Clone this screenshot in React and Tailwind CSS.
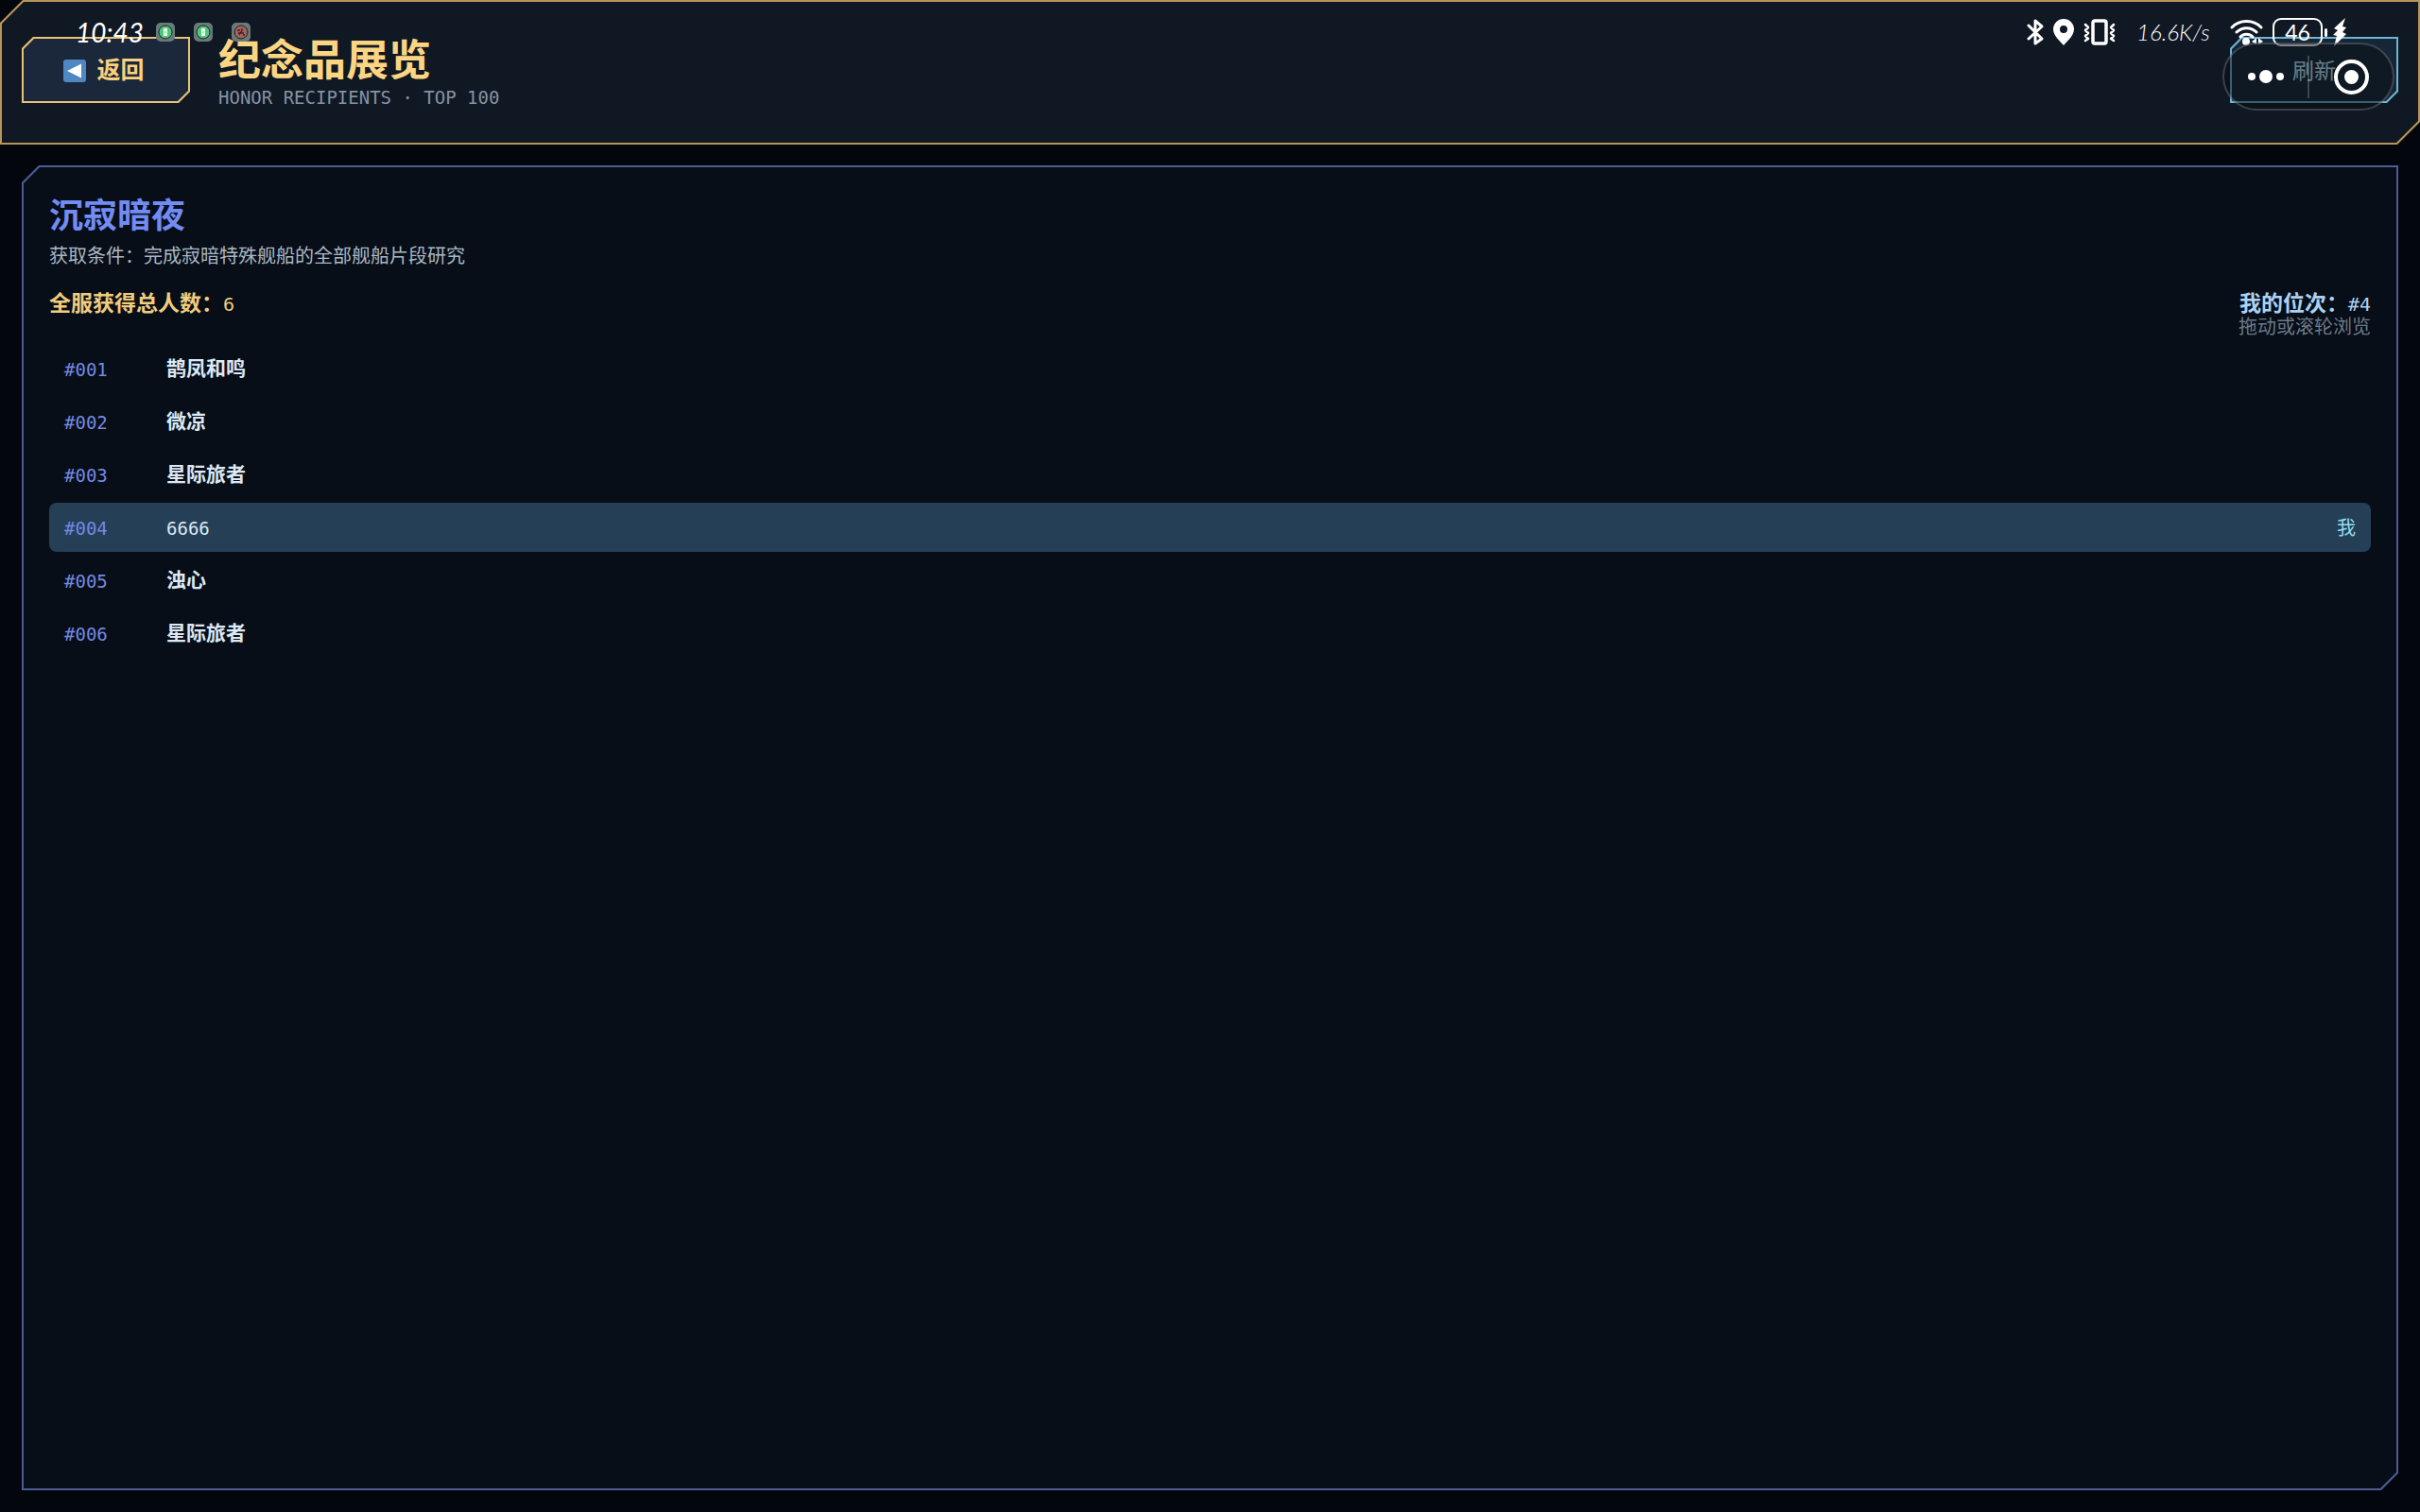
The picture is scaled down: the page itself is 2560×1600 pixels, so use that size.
import clsx from "clsx";

const RECIPIENTS = [
  { rank: "#001", name: "鹊凤和鸣" },
  { rank: "#002", name: "微凉" },
  { rank: "#003", name: "星际旅者" },
  { rank: "#004", name: "6666", me: true },
  { rank: "#005", name: "浊心" },
  { rank: "#006", name: "星际旅者" },
];

// Box with the top-left and bottom-right corners cut off
const CUT_24 = "[clip-path:polygon(24px_0,100%_0,100%_calc(100%-24px),calc(100%-24px)_100%,0_100%,0_24px)]";
const CUT_23 = "[clip-path:polygon(23px_0,100%_0,100%_calc(100%-23px),calc(100%-23px)_100%,0_100%,0_23px)]";
const CUT_18 = "[clip-path:polygon(18px_0,100%_0,100%_calc(100%-18px),calc(100%-18px)_100%,0_100%,0_18px)]";
const CUT_17 = "[clip-path:polygon(17px_0,100%_0,100%_calc(100%-17px),calc(100%-17px)_100%,0_100%,0_17px)]";
const CUT_12 = "[clip-path:polygon(12px_0,100%_0,100%_calc(100%-12px),calc(100%-12px)_100%,0_100%,0_12px)]";
const CUT_11 = "[clip-path:polygon(11px_0,100%_0,100%_calc(100%-11px),calc(100%-11px)_100%,0_100%,0_11px)]";

function AppBadge({ red }) {
  return (
    <svg viewBox="0 0 20 20" className="h-5 w-5">
      <rect width="20" height="20" rx="5" fill="#6b7a7a" />
      <circle cx="10" cy="10" r="7" fill={red ? "#a8605c" : "#4fc978"} stroke="#12251f" strokeWidth="1" />
      {red ? (
        <path d="M6 8h3M11 6v3M7 11h6M8 13l3-5M12 13h2" stroke="#33262a" strokeWidth="1.3" fill="none" />
      ) : (
        <>
          <rect x="8" y="6" width="4" height="8" fill="#f1fff5" />
          <path d="M10 9v2" stroke="#4fc978" />
        </>
      )}
    </svg>
  );
}

function StatusBar() {
  return (
    <div className="pointer-events-none absolute inset-x-0 top-0 z-10 flex h-[68px] items-center justify-between pr-[78px] pl-[80px] font-[Lato,sans-serif] text-white">
      <div className="flex items-center">
        <span className="w-[85px] text-[28px] italic">10:43</span>
        <div className="flex items-center gap-5">
          <AppBadge />
          <AppBadge />
          <AppBadge red />
        </div>
      </div>
      <div className="flex items-center">
        <svg viewBox="0 0 18 28" className="h-7 w-[18px]" fill="none" stroke="#fff" strokeWidth="3" strokeLinecap="round" strokeLinejoin="round">
          <path d="M2 21L16 8 9 2v10M2 7l7 7M9 17v9l7-5-5-5" />
        </svg>
        <svg viewBox="0 0 22 28" className="ml-[10px] h-7 w-[22px]" fill="#fff">
          <path fillRule="evenodd" d="M11 0a11 11 0 0 1 11 11c0 7-8 13-11 17C8 24 0 18 0 11A11 11 0 0 1 11 0zm0 7a4 4 0 1 0 0 8 4 4 0 0 0 0-8z" />
        </svg>
        <svg viewBox="0 0 34 28" className="ml-[10px] h-7 w-[34px]" fill="none" stroke="#fff" strokeLinejoin="round" strokeLinecap="round">
          <rect x="10" y="2" width="14" height="24" rx="2" strokeWidth="3.5" />
          <path d="M2 6l3 3-3 3 3 3-3 3 3 3-3 2M32 6l-3 3 3 3-3 3 3 3-3 3 3 2" strokeWidth="2.5" />
        </svg>
        <span className="ml-[22px] w-[99px] text-[24px] font-light italic">16.6K/s</span>
        <svg viewBox="0 0 36 28" className="h-7 w-9" fill="none" stroke="#fff" strokeWidth="3" strokeLinecap="round">
          <path d="M2 9a22 22 0 0 1 31 0M7 14a15 15 0 0 1 21 0M11 19a9 9 0 0 1 13 0" />
          <circle cx="17" cy="24" r="4" fill="#fff" stroke="none" />
          <path d="M23 24l5-4v7zM35 24l-5-4v7z" fill="#fff" stroke="none" />
        </svg>
        <span className="ml-[9px] flex h-[30px] w-[53px] items-center justify-center rounded-[9px] border-2 border-white text-[23px]">46</span>
        <span className="ml-[2px] h-[9px] w-[3px] rounded bg-white" />
        <svg viewBox="0 0 14 30" className="ml-[6px] h-[30px] w-[14px]" fill="#fff">
          <path d="M13 0L1 11l4 2-5 5 4 1-3 11L14 17l-4-2 4-5-4-1z" />
        </svg>
      </div>
    </div>
  );
}

function Capsule() {
  return (
    <div className="absolute top-[45px] right-[27px] z-10 flex h-[72px] w-[182px] items-center rounded-full border-2 border-white/20 bg-[#070c12]/50">
      <button aria-label="更多" className="flex h-full flex-1 items-center justify-center gap-1">
        <span className="h-2 w-2 rounded-full bg-white" />
        <span className="h-[14px] w-[14px] rounded-full bg-white" />
        <span className="h-2 w-2 rounded-full bg-white" />
      </button>
      <span className="h-[45px] w-[2px] bg-white/20" />
      <button aria-label="关闭" className="flex h-full flex-1 items-center justify-center">
        <span className="flex h-[37px] w-[37px] items-center justify-center rounded-full border-4 border-white">
          <span className="h-[15px] w-[15px] rounded-full bg-white" />
        </span>
      </button>
    </div>
  );
}

function Header() {
  return (
    <header className={`bg-[#b8945a] p-[2px] ${CUT_24}`}>
      <div className={`flex h-[149px] items-start justify-between bg-[#101823] px-[21px] pt-[37px] ${CUT_23}`}>
        <div className="flex items-start">
          <button className={`h-[70px] w-[178px] bg-[#e9c273] p-[2px] ${CUT_12}`}>
            <span className={`flex h-full items-center justify-center gap-[11px] bg-[#1b273a] pt-[2px] pr-1 text-[25px] font-bold text-[#fad17e] ${CUT_11}`}>
              <svg viewBox="0 0 24 24" className="h-6 w-6">
                <rect width="24" height="24" rx="3" fill="#4e87c2" />
                <path d="M4 12L19 4.500v15z" fill="#fff" />
              </svg>
              返回
            </span>
          </button>
          <div className="ml-[30px] pt-[2px]">
            <h1 className="text-[45px] leading-[48px] font-bold text-[#fcd583]">纪念品展览</h1>
            <p className="mt-[2px] text-[19px] leading-[24px] text-[#8592a6]">HONOR RECIPIENTS · TOP 100</p>
          </div>
        </div>
        <button className={`h-[70px] w-[178px] bg-[#6fb4d4] p-[2px] ${CUT_12}`}>
          <span className={`flex h-full items-center justify-center bg-[#152736] pt-[2px] text-[23px] text-[#c4ecfc] ${CUT_11}`}>
            刷新
          </span>
        </button>
      </div>
    </header>
  );
}

export default function App() {
  return (
    <div className="relative flex min-h-screen flex-col bg-[#04060d] font-['DejaVu_Sans_Mono','Noto_Sans_CJK_SC',monospace]">
      <StatusBar />
      <Capsule />
      <Header />
      <main className={`mx-[23px] mt-[22px] mb-[23px] flex flex-1 flex-col bg-[#4c5b96] p-[2px] ${CUT_18}`}>
        <section className={`flex-1 bg-[#070e17] px-[27px] pt-[28px] ${CUT_17}`}>
          <h2 className="text-[36px] leading-[48px] font-bold text-[#738bf4]">沉寂暗夜</h2>
          <p className="mt-[2px] text-[20px] leading-[32px] text-[#aab7c5]">
            获取条件：完成寂暗特殊舰船的全部舰船片段研究
          </p>
          <div className="mt-[22px] flex items-start justify-between text-[23px] leading-[24px] font-bold">
            <p className="text-[#f0cc7e]">
              全服获得总人数：<span className="text-[20px] font-normal">6</span>
            </p>
            <div className="text-right">
              <p className="text-[#abd2f2]">
                我的位次：<span className="text-[20px] font-normal">#4</span>
              </p>
              <p className="text-[20px] font-normal text-[#6c7a8a]">拖动或滚轮浏览</p>
            </div>
          </div>
          <ul className="mt-[6px] flex flex-col gap-1">
            {RECIPIENTS.map((r) => (
              <li
                key={r.rank}
                className={clsx("flex h-[52px] items-center rounded-lg px-4 pt-[2px]", r.me && "bg-[#254056]")}
              >
                <span className="w-[108px] text-[19px] text-[#7489e4]">{r.rank}</span>
                <span className={clsx("flex-1 text-[#dce8f5]", r.me ? "text-[19px]" : "text-[21px] font-bold")}>
                  {r.name}
                </span>
                {r.me && <span className="text-[20px] text-[#92dcf0]">我</span>}
              </li>
            ))}
          </ul>
        </section>
      </main>
    </div>
  );
}
